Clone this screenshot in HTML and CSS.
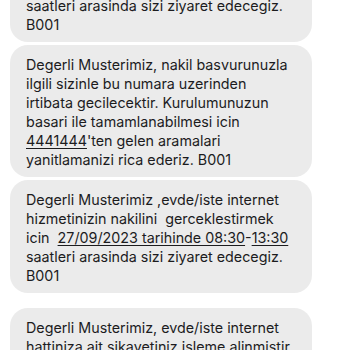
FILE: index.html
```html
<!DOCTYPE html>
<html lang="tr">
<head>
  <meta charset="UTF-8">
  <meta name="viewport" content="width=device-width, initial-scale=1.0">
  <title>Mesajlar</title>
  <link rel="stylesheet" href="styles.css">
</head>
<body>
  <div class="thread">
    <div class="bubble">
      Degerli Musterimiz ,evde/iste internet hizmetinizin nakilini&nbsp; gerceklestirmek icin&nbsp; <u>27/09/2023 tarihinde 08:30</u>-<u>13:30</u> saatleri arasinda sizi ziyaret edecegiz. B001
    </div>

    <div class="bubble">
      Degerli Musterimiz, nakil basvurunuzla ilgili sizinle bu numara uzerinden irtibata gecilecektir. Kurulumunuzun basari ile tamamlanabilmesi icin <u>4441444</u>'ten gelen aramalari yanitlamanizi rica ederiz. B001
    </div>

    <div class="bubble">
      Degerli Musterimiz ,evde/iste internet hizmetinizin nakilini&nbsp; gerceklestirmek icin&nbsp; <u>27/09/2023 tarihinde 08:30</u>-<u>13:30</u> saatleri arasinda sizi ziyaret edecegiz. B001
    </div>

    <div class="bubble later">
      Degerli Musterimiz, evde/iste internet hattiniza ait sikayetiniz isleme alinmistir. Sikayetinizle ilgili gelismeleri SMS ile bilgilendirecegiz. B001
    </div>
  </div>
</body>
</html>
```

FILE: styles.css
```css
body {
  margin: 0;
  padding: 0;
  background: #fff;
  font-family: Inter, 'Noto Sans', sans-serif;
  overflow: hidden;
}
.thread {
  display: flex;
  flex-direction: column;
  gap: 3px;
  margin-top: -71px;
  padding: 0 38px 0 10px;
}
.bubble {
  background: #ebebeb;
  color: #1c1c1e;
  border-radius: 18px;
  padding: 10px 16px 8px 16px;
  font-size: 14.3px;
  line-height: 19px;
}
.bubble u {
  text-decoration-thickness: 1px;
  text-underline-offset: 2px;
}
.later { margin-top: 12px; }
```
